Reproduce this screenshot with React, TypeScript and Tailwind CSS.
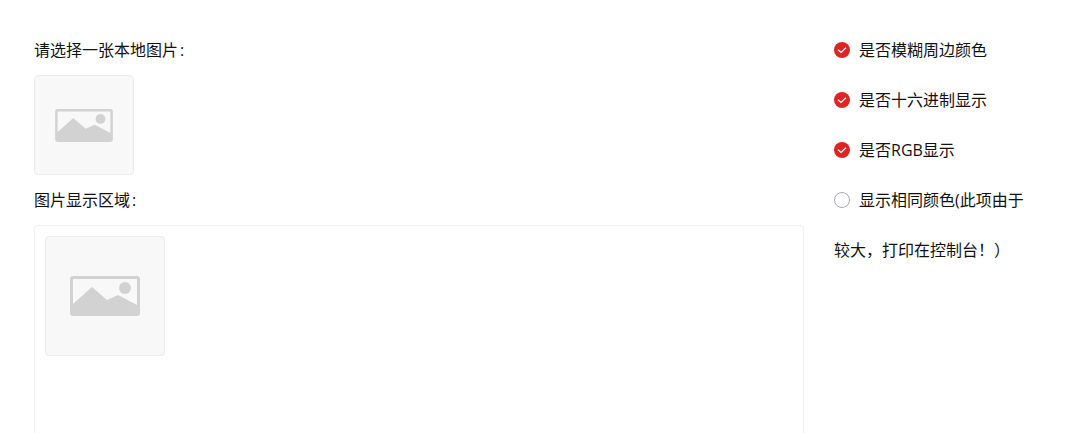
const font = { fontFamily: '"Open Sans", "Noto Sans CJK SC", sans-serif' };

function Placeholder({ box, icon }: { box: string; icon: string }) {
  return (
    <div className={`${box} flex items-center justify-center rounded-[4px] border border-[#ececec] bg-[#f8f8f8]`}>
      <svg viewBox="0 0 70 40" className={icon} aria-hidden="true">
        <path
          fillRule="evenodd"
          fill="#d2d2d2"
          d="M3 0H67A3 3 0 0 1 70 3V37A3 3 0 0 1 67 40H3A3 3 0 0 1 0 37V3A3 3 0 0 1 3 0ZM3 3V28L22 11L37 24L48 19L67 29V3Z"
        />
        <circle cx="55" cy="12" r="6" fill="#d2d2d2" />
      </svg>
    </div>
  );
}

function Check({ on, children }: { on?: boolean; children: React.ReactNode }) {
  return (
    <span>
      <span
        className={`mr-[9px] inline-flex h-4 w-4 items-center justify-center rounded-full align-[-2px] ${
          on ? "bg-[#e02424]" : "border-[1.5px] border-[#a8a8b0] bg-white"
        }`}
      >
        {on && (
          <svg viewBox="0 0 16 16" className="h-4 w-4" aria-hidden="true">
            <path d="M4 7.7L7 10.5L12 5.8" fill="none" stroke="#fff" strokeWidth="1.2" />
          </svg>
        )}
      </span>
      {children}
    </span>
  );
}

export default function App() {
  return (
    <div className="flex h-screen overflow-hidden bg-white pl-[34px] pt-[25px] text-[16px] leading-[50px] text-[#111]" style={font}>
      <div className="w-[770px] shrink-0">
        <div>请选择一张本地图片<span className="ml-[2px]">:</span></div>
        <Placeholder box="h-[100px] w-[100px]" icon="w-[58px] h-[33px]" />
        <div>图片显示区域<span className="ml-[2px]">:</span></div>
        <div className="h-[400px] rounded-[4px] border border-[#f0f0f0] p-[10px]">
          <Placeholder box="h-[120px] w-[120px]" icon="w-[70px] h-[40px]" />
        </div>
      </div>
      <div className="ml-[30px] w-[200px] shrink-0">
        <div><Check on>是否模糊周边颜色</Check></div>
        <div><Check on>是否十六进制显示</Check></div>
        <div><Check on>是否RGB显示</Check></div>
        <div><Check>显示相同颜色(此项由于较大，打印在控制台！）</Check></div>
      </div>
    </div>
  );
}
